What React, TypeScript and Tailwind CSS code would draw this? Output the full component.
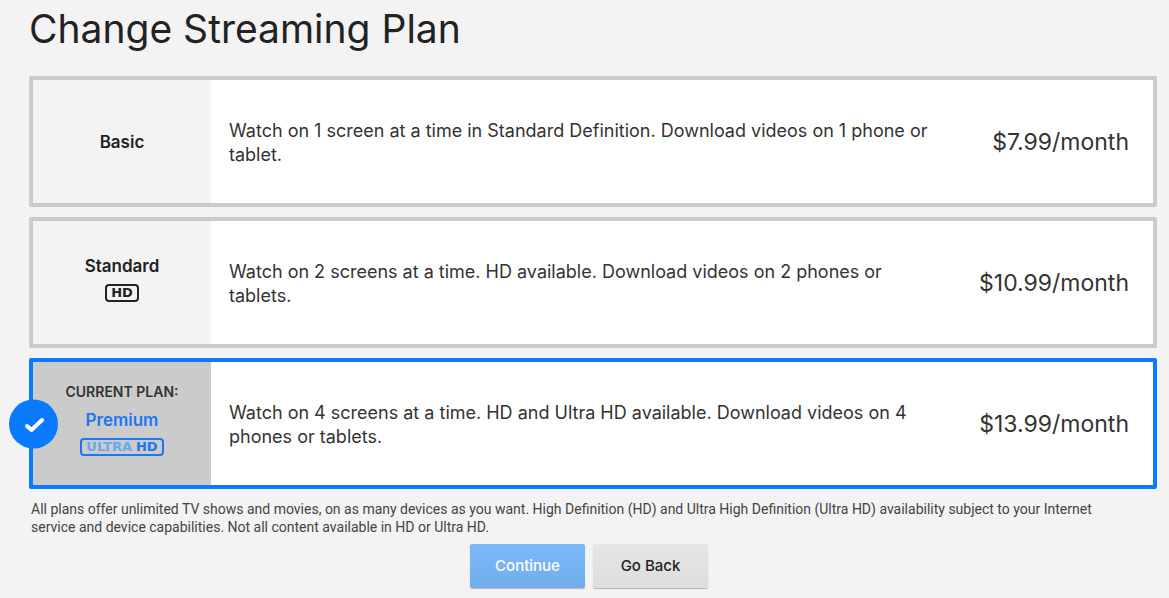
import { useState } from 'react';

interface Plan {
  id: string;
  name: string;
  quality?: 'HD' | 'ULTRA HD';
  description: string;
  price: string;
}

const CURRENT_PLAN = 'premium';

const plans: Plan[] = [
  {
    id: 'basic',
    name: 'Basic',
    description:
      'Watch on 1 screen at a time in Standard Definition. Download videos on 1 phone or tablet.',
    price: '$7.99/month'
  },
  {
    id: 'standard',
    name: 'Standard',
    quality: 'HD',
    description:
      'Watch on 2 screens at a time. HD available. Download videos on 2 phones or tablets.',
    price: '$10.99/month'
  },
  {
    id: 'premium',
    name: 'Premium',
    quality: 'ULTRA HD',
    description:
      'Watch on 4 screens at a time. HD and Ultra HD available. Download videos on 4 phones or tablets.',
    price: '$13.99/month'
  }
];

function QualityBadge({ quality }: { quality: 'HD' | 'ULTRA HD' }) {
  return (
    <span className="flex items-center gap-1 h-[18px] px-1 rounded-[4px] border-2 border-current font-['DejaVu_Sans',sans-serif] text-[13px] leading-none font-bold">
      {quality === 'ULTRA HD' && <span className="text-[#6ba8ee]">ULTRA</span>}
      <span>HD</span>
    </span>
  );
}

interface PlanCardProps {
  plan: Plan;
  selected: boolean;
  onSelect: (id: string) => void;
}

function PlanCard({ plan, selected, onSelect }: PlanCardProps) {
  return (
    <label
      className={`relative flex min-h-[131px] rounded-[2px] border-4 bg-white cursor-pointer ${
        selected ? 'border-[#0a7bff]' : 'border-[#cbcbcb]'
      }`}
    >
      <input
        type="radio"
        name="plan"
        value={plan.id}
        checked={selected}
        onChange={() => onSelect(plan.id)}
        className="sr-only"
      />

      {/* Check mark on the left border */}
      {selected && (
        <span className="absolute top-1/2 -left-6 -translate-y-1/2 flex items-center justify-center size-[49px] rounded-full bg-[#0a7bff]">
          <svg className="size-6" viewBox="0 0 24 24" fill="none" stroke="#fff">
            <path strokeWidth={4} strokeLinejoin="round" strokeLinecap="round" d="M5 14.500L9.500 18.500L20 8.500" />
          </svg>
        </span>
      )}

      {/* Plan name */}
      <div
        className={`flex flex-col items-center justify-center w-[178px] shrink-0 ${
          plan.quality ? 'pb-2.5' : ''
        } ${selected ? 'bg-[#cbcbcb] text-[#1d76f2]' : 'bg-[#f3f3f3] text-[#222]'}`}
      >
        {plan.id === CURRENT_PLAN && (
          <span className="mb-1.5 text-sm font-semibold text-[#333]">CURRENT PLAN:</span>
        )}
        <span className="text-[17px] leading-6 font-semibold">{plan.name}</span>
        {plan.quality && (
          <span className="mt-1.5">
            <QualityBadge quality={plan.quality} />
          </span>
        )}
      </div>

      {/* Description and price */}
      <div className="flex flex-1 items-center justify-between gap-10 pt-0.5 pl-[18px] pr-6">
        <p className="text-lg leading-6 text-[#333]">{plan.description}</p>
        <span className="shrink-0 text-[23px] text-[#333]">{plan.price}</span>
      </div>
    </label>
  );
}

export default function App() {
  const [selectedPlan, setSelectedPlan] = useState(CURRENT_PLAN);

  return (
    <div className="min-h-screen bg-[#f3f3f3] pr-3 pl-[29px] pt-1 pb-2 font-[Inter,sans-serif]">
      <h1 className="text-[39px] leading-[50px] text-[#222]">Change Streaming Plan</h1>

      <form onSubmit={(e) => e.preventDefault()}>
        <div className="mt-[22px] flex flex-col gap-[10px]">
          {plans.map((plan) => (
            <PlanCard
              key={plan.id}
              plan={plan}
              selected={plan.id === selectedPlan}
              onSelect={setSelectedPlan}
            />
          ))}
        </div>

        <p className="mt-[11px] pl-0.5 pr-6 font-[Roboto,sans-serif] text-sm leading-[18px] text-[#444]">
          All plans offer unlimited TV shows and movies, on as many devices as you want. High
          Definition (HD) and Ultra High Definition (Ultra HD) availability subject to your Internet
          service and device capabilities. Not all content available in HD or Ultra HD.
        </p>

        {/* Actions */}
        <div className="mt-2 flex justify-center gap-2 pr-2">
          <button
            type="submit"
            disabled={selectedPlan === CURRENT_PLAN}
            className="w-[115px] h-11 rounded-[2px] bg-linear-to-b from-[#7ab8fa] to-[#71aeee] text-[15px] font-medium text-white shadow-[0_1px_1px_rgba(0,0,0,0.25)]"
          >
            Continue
          </button>
          <button
            type="button"
            className="w-[115px] h-11 rounded-[2px] bg-linear-to-b from-[#e6e6e6] to-[#dddddd] text-[15px] font-medium text-[#222] shadow-[0_1px_1px_rgba(0,0,0,0.25)]"
          >
            Go Back
          </button>
        </div>
      </form>
    </div>
  );
}
